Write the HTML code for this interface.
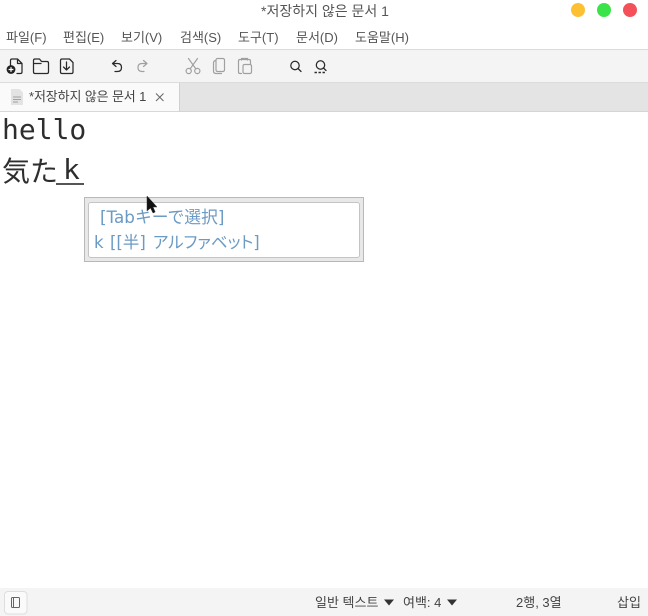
<!DOCTYPE html>
<html><head><meta charset="utf-8">
<style>
html,body{margin:0;padding:0;width:648px;height:616px;overflow:hidden;background:#fff}
body{position:relative;font-family:"Liberation Sans","Noto Sans CJK KR",sans-serif;color:#4a4a4a}
.a{position:absolute;white-space:nowrap}
.m{top:29px;font-size:13px;line-height:18px;color:#555}
svg{position:absolute;left:0;top:0}
.k{stroke:#2a2a2a;fill:none;stroke-width:1.25;stroke-linecap:round;stroke-linejoin:round}
.g{stroke:#a0a0a0;fill:none;stroke-width:1.2;stroke-linecap:round;stroke-linejoin:round}
.p{font-size:16.5px;line-height:24px;color:#6b9ac4;font-family:'DejaVu Sans','Noto Sans CJK JP',sans-serif}
.s{top:594px;font-size:13px;line-height:18px;color:#444}
</style></head><body>
<div class="a" style="left:0;top:49px;width:648px;background:#f4f4f4;border-top:1px solid #dcdcdc;border-bottom:1px solid #dcdcdc;box-sizing:border-box;height:34px"></div>
<div class="a" style="left:0;top:83px;width:648px;height:29px;background:#e4e4e4;border-bottom:1px solid #d4d4d4;box-sizing:border-box"></div>
<div class="a" style="left:0;top:83px;width:180px;height:29px;background:#fafafa;border-right:1px solid #d0d0d0;border-bottom:1px solid #d8d8d8;box-sizing:border-box"></div>
<div class="a" style="left:0;top:588px;width:648px;height:28px;background:#f4f4f4"></div>

<div class="a" style="left:1px;width:648px;top:1px;text-align:center;font-size:14px;line-height:20px;color:#555">*저장하지 않은 문서 1</div>
<div class="a" style="left:571px;top:3px;width:14px;height:14px;border-radius:50%;background:#fdc033"></div>
<div class="a" style="left:597px;top:3px;width:14px;height:14px;border-radius:50%;background:#3be34b"></div>
<div class="a" style="left:623px;top:3px;width:14px;height:14px;border-radius:50%;background:#f4505a"></div>

<div class="a m" style="left:6px">파일(F)</div>
<div class="a m" style="left:63px">편집(E)</div>
<div class="a m" style="left:121px">보기(V)</div>
<div class="a m" style="left:180px">검색(S)</div>
<div class="a m" style="left:238px">도구(T)</div>
<div class="a m" style="left:296px">문서(D)</div>
<div class="a m" style="left:355px">도움말(H)</div>

<svg width="648" height="616" viewBox="0 0 648 616">
<!-- new -->
<path class="k" d="M10.5 65V60.5Q10.5 59 12 59H17.5L22 63.5V72Q22 73.5 20.5 73.5H17M17.5 59V63.5H22"/>
<circle cx="11" cy="69.5" r="4.4" fill="#222"/>
<path d="M8.6 69.5H13.4M11 67.1V71.9" stroke="#fff" stroke-width="1.2"/>
<!-- open -->
<path class="k" d="M33.5 60.5Q33.5 59 35 59H39.5L41.5 61.5H47Q48.5 61.5 48.5 63V72Q48.5 73.5 47 73.5H35Q33.5 73.5 33.5 72ZM33.5 63.5H41"/>
<!-- save -->
<path class="k" d="M60.5 60.5Q60.5 59 62 59H69.5L73 62.5V72Q73 73.5 71.5 73.5H62Q60.5 73.5 60.5 72ZM66.5 62V70M63.5 67L66.5 70L69.5 67"/>
<!-- undo -->
<path class="k" d="M116 60.5L112.5 63.5L116 66.5M113 63.5H117.5Q121.5 63.5 121.5 67.5Q121.5 71.5 117.5 71.5H115"/>
<!-- redo -->
<path class="g" d="M143.5 60.5L147 63.5L143.5 66.5M146.5 63.5H142Q138 63.5 138 67.5Q138 71.5 142 71.5H144"/>
<!-- cut -->
<circle class="g" cx="188.7" cy="71" r="2.6"/><circle class="g" cx="197.3" cy="71" r="2.6"/>
<path class="g" d="M190.2 68.8L197.5 58.5M195.8 68.8L188.5 58.5"/>
<!-- copy -->
<path class="g" d="M215.5 60.5Q213.5 61 213.5 63V71Q213.5 73.5 216 73.5H221.5"/>
<rect class="g" x="216" y="58.5" width="8.5" height="13" rx="1.5"/>
<!-- paste -->
<path class="g" d="M241.5 73.5H240Q238.5 73.5 238.5 72V61Q238.5 59.5 240 59.5H249Q250.5 59.5 250.5 61V64M241.5 60V58.5H247.5V60"/>
<rect class="g" x="243" y="64.5" width="8.5" height="9" rx="1.5"/>
<!-- find -->
<circle class="k" cx="295" cy="65.5" r="4.2" stroke-width="1.4"/>
<path class="k" d="M298 68.5L301 71.5" stroke-width="1.4"/>
<!-- replace -->
<circle class="k" cx="320.5" cy="65" r="4.2" stroke-width="1.4"/>
<path class="k" d="M323.5 68L326 70.5" stroke-width="1.4"/>
<path d="M314.5 72.5h2.4M318.5 72.5h2.4M322.5 72.5h2.4" stroke="#2a2a2a" stroke-width="1.5"/>
<!-- tab doc -->
<path d="M11 89H19.5L23 92.5V105H11Z" fill="#e3e3e3"/>
<path d="M13 97H21M13 99.5H21M13 102H18" stroke="#8c8c8c" stroke-width="0.8"/>
<!-- tab close -->
<path d="M156 93.5L163.5 101M163.5 93.5L156 101" stroke="#666" stroke-width="1"/>
<!-- status triangles -->
<path d="M384 599.5H394L389 605.5Z" fill="#333"/>
<path d="M447 599.5H457L452 605.5Z" fill="#333"/>
<!-- sidebar button -->
<rect x="4.5" y="591.5" width="22.5" height="22.5" rx="3.5" fill="#fafafa" stroke="#dedede"/>
<rect x="11.5" y="597.5" width="8" height="10" rx="1" fill="none" stroke="#666" stroke-width="1"/>
<path d="M13.5 597.5V607.5" stroke="#666" stroke-width="1"/>
</svg>

<div class="a" style="left:29px;top:88px;font-size:13px;line-height:18px;color:#444;letter-spacing:-0.12px">*저장하지 않은 문서 1</div>

<div class="a" style="left:2px;top:113px;font-family:'DejaVu Sans Mono','Liberation Mono',monospace;font-size:28px;line-height:34px;color:#2e2e2e">hello</div>
<div class="a" style="left:2px;top:151px;font-family:'Noto Sans CJK JP',sans-serif;font-size:28px;line-height:38px;color:#2e2e2e">気た</div>
<div class="a" style="left:63px;top:151px;font-family:'DejaVu Sans Mono',monospace;font-size:28px;line-height:38px;color:#2e2e2e">k</div>
<div class="a" style="left:56px;top:183px;width:28px;height:2px;background:#555"></div>

<div class="a" style="left:84px;top:197px;width:280px;height:65px;box-sizing:border-box;background:#e8e8e8;border:1px solid #b8b8b8"></div>
<div class="a" style="left:88px;top:202px;width:272px;height:56px;box-sizing:border-box;background:#fff;border:1px solid #c4c4c4;border-radius:3px"></div>
<div class="a p" style="left:100px;top:205px;font-size:16.8px">[Tabキーで選択]</div>
<div class="a p" style="left:94px;top:231px">k</div>
<div class="a p" style="left:110px;top:231px">[[半]</div>
<div class="a p" style="left:153px;top:231px;font-feature-settings:'palt'">アルファベット]</div>

<svg width="648" height="616" viewBox="0 0 648 616" style="z-index:5">
<path d="M147 196V211L150.5 208L153 213L155.2 212L153 207H157Z" fill="#111" stroke="#333" stroke-width="0.5"/>
</svg>

<div class="a s" style="left:315px">일반 텍스트</div>
<div class="a s" style="left:403px">여백: 4</div>
<div class="a s" style="left:516px">2행, 3열</div>
<div class="a s" style="left:617px">삽입</div>
</body></html>
